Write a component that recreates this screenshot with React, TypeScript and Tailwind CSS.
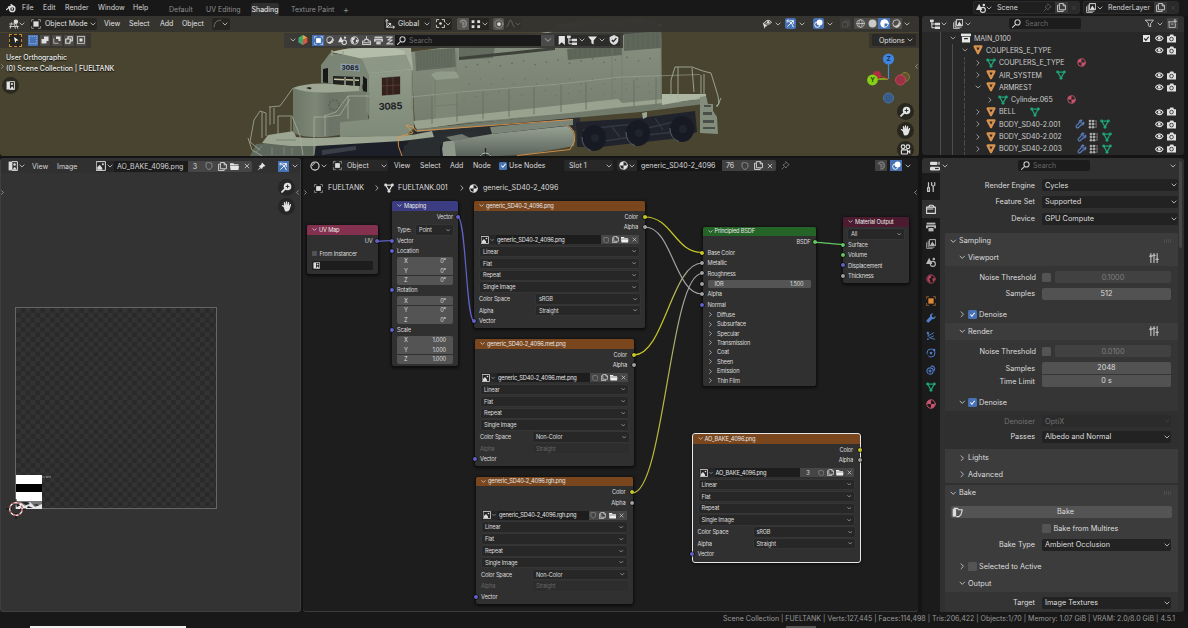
import React from "react";

type Kids = { children?: React.ReactNode };

const line = { fill: "none", stroke: "currentColor", strokeWidth: 1.6, strokeLinejoin: "round" as const, strokeLinecap: "round" as const };

const SHAPES: Record<string, React.ReactNode> = {
  blender: (<g><path {...line} strokeWidth={1.9} d="M1 10.5 9 4M4 6.2h7" /><path {...line} strokeWidth={1.9} d="M8 2.5 14 7" /><circle cx="10" cy="9.4" r="4.2" {...line} strokeWidth={2.3} /><circle cx="10" cy="9.4" r="1.5" fill="currentColor" /></g>),
  down: <path {...line} strokeWidth={2.3} d="M2.5 5.2 8 10.8 13.5 5.2" />,
  right: <path {...line} strokeWidth={2.3} d="M5 2 11 8 5 14" />,
  left: <path {...line} strokeWidth={2.3} d="M11 2 5 8 11 14" />,
  view3d: (<g><circle cx="11" cy="4.5" r="3.6" fill="currentColor" /><path {...line} strokeWidth={1.3} d="M1 8h7M1 12h14M4 6 2 15M9 8l1 7M12 9l2 6" /></g>),
  object: (<g><rect x="3.8" y="3.8" width="8.4" height="8.4" fill="currentColor" /><path {...line} strokeWidth={1.3} opacity=".7" d="M1 4V1h3M12 1h3v3M15 12v3h-3M4 15H1v-3" /></g>),
  cursor: <path d="M4 2 13 8.5 8.5 9.3 6.5 14Z" fill="currentColor" />,
  axes: (<g {...line}><path d="M3 1v12h12M3 13 9 7" /><path d="M1 3 3 1l2 2M13 11l2 2-2 2M9 10V7H6" /></g>),
  pivot: (<g><circle cx="8" cy="8" r="2.4" fill="currentColor" /><path {...line} d="M1 5V1h4M11 1h4v4M15 11v4h-4M5 15H1v-4" /></g>),
  magnet: <path {...line} strokeWidth={3} opacity=".7" d="M2.5 5C6 0 13 2 13 8c0 4-3 6-6 6M6 7c2-2 4 2 1 3.5" />,
  grid4: (<g fill="currentColor"><rect x="1" y="2" width="4.5" height="4.5" /><rect x="10" y="2" width="4.5" height="4.5" /><rect x="1" y="10" width="4.5" height="4.5" /><rect x="10" y="10" width="4.5" height="4.5" /></g>),
  prop: (<g><circle cx="8" cy="8" r="3" fill="currentColor" /><circle cx="8" cy="8" r="6.5" {...line} opacity=".35" /></g>),
  falloff: <path {...line} d="M1 14C5 13 5 2 8 2s3 11 7 12" />,
  curve: <path {...line} d="M2 14C2 6 6 3 14 2" />,
  visible: (<g><path {...line} d="M4 6C7 1 12 1 15 5c-2 4-7 4-9 2" /><circle cx="10" cy="5" r="2" fill="currentColor" /><path d="M1 5 9 11 5.5 12 4 15.5Z" fill="currentColor" /></g>),
  gizmo: (<g {...line}><path d="M3 13 13 3M8 3h5v5" /><path d="M2 3c5 1 9 5 11 11" /><path d="M2 6V2h4" opacity=".7" /></g>),
  overlay: (<g><circle cx="6" cy="10" r="4.8" {...line} /><circle cx="10" cy="6" r="5.2" fill="currentColor" /></g>),
  xray: (<g {...line} opacity=".3"><rect x="2" y="5" width="9" height="9" /><path d="M5 5V2h9v9h-3" /></g>),
  wire: (<g {...line} strokeWidth={1.3}><circle cx="8" cy="8" r="6.8" /><ellipse cx="8" cy="8" rx="3" ry="6.8" /><path d="M1.5 8h13" /></g>),
  solid: <circle cx="8" cy="8" r="7" fill="currentColor" />,
  material: (<g><circle cx="8" cy="8" r="6.6" {...line} /><path d="M8 1A7 7 0 0 0 8 15V8h6.8A7 7 0 0 0 8 1Z" fill="currentColor" /></g>),
  matball: (<g><circle cx="8" cy="8" r="6.8" {...line} /><path d="M8 1.4A6.6 6.6 0 0 0 1.4 8H8v6.6A6.6 6.6 0 0 0 14.6 8H8Z" fill="currentColor" /></g>),
  rendered: (<g><circle cx="8" cy="8" r="6.6" {...line} /><path d="M3 12C8 13 13 9 12 3 16 7 13 15 8 15 6 15 4 14 3 12Z" fill="currentColor" /></g>),
  tree: (<g fill="currentColor"><rect x="0" y="1" width="6" height="4" /><rect x="8" y="6" width="8" height="4" /><rect x="8" y="12" width="8" height="4" /><path {...line} d="M3 5v9h5M3 8h5" /></g>),
  layers: (<g><path {...line} strokeWidth={1.3} d="M1 6v9h9M3.5 3.5V13H13" /><rect x="6" y="1" width="9.5" height="9.5" {...line} /><path d="M7 9.5 10 4l4 5.5Z" fill="currentColor" /></g>),
  funnel: <path {...line} d="M1 2h14L10 8v6l-4-2V8Z" />,
  funnelf: <path fill="currentColor" d="M0 1h16L10 8v7l-4-2V8Z" />,
  search: (<g {...line} strokeWidth={1.9}><circle cx="9.8" cy="6" r="4.6" /><path d="M6.5 9.5 1 15" /></g>),
  zoomin: (<g><circle cx="9.5" cy="6.5" r="5.5" fill="currentColor" /><path {...line} strokeWidth={2.6} d="M5.5 10.5 1.5 14.5" /><path d="M9.5 3.8v5.4M6.8 6.5h5.4" stroke="#222" strokeWidth="1.3" /></g>),
  hand: <path fill="currentColor" d="M4 9 1 6.8C1.5 5 3 5.5 4.5 7L4 2.5c.7-1.4 1.6-1 2 .2L6.7 6 7 1.4c.6-1.3 1.8-1 2 0L9.2 6l1-3.8c.8-1 1.8-.6 1.8.5L11.5 7l1.6-2.2c1-.8 1.9 0 1.5 1L13 11c-.8 3-2.200 4.400-5 4.400S5 12 4 9Z" />,
  camview: (<g><circle cx="4.5" cy="4" r="2.7" {...line} /><circle cx="11.5" cy="4" r="2.7" {...line} /><rect x="2" y="8.5" width="9" height="6" rx="1" {...line} /><path d="M11 11 15 8.500v6Z" fill="currentColor" /></g>),
  pin: (<g fill="currentColor"><path d="M9 1 15 7 13.5 8 12.5 7.6 9.6 10.4 9 13 3 7 5.7 6.4 8.4 3.5 8 2.4Z" /><path d="M5.5 9 7 10.5 1 15.3Z" /></g>),
  pino: <path {...line} strokeWidth={1.3} d="M9 1.5 14.5 7 12.5 7.6 9.6 10.4 9 12.5 3.5 7 5.7 6.4 8.4 3.5ZM6 10 1.5 14.5" />,
  copy: (<g {...line}><path d="M5 1h6l4 4v7H5ZM11 1v4h4" /><path d="M2.5 4H1v11h10v-1.5" /></g>),
  close: <path {...line} strokeWidth={2} d="M3 3 13 13M13 3 3 13" />,
  shield: <path {...line} strokeWidth={1.5} d="M8 1 14 3v5c0 4-3 6-6 7-3-1-6-3-6-7V3Z" />,
  shieldf: (<g><path fill="currentColor" d="M8 0 15 3v5c0 4-3 7-7 8-4-1-7-4-7-8V3Z" /><path d="M4.5 8 7 10.5 11.8 5" fill="none" stroke="#222" strokeWidth="2" /></g>),
  folder: (<g fill="currentColor"><path d="M0 2h6l2 2h7v2H0Z" /><path d="M0 7h16l-1 7H1Z" /></g>),
  bookmark: <path d="M3 0h11v16L8.500 11 3 16Z" fill="currentColor" />,
  image: (<g><rect x="1" y="1" width="14" height="14" {...line} /><path d="M2 14V10l4-4 4 5v3Z" fill="currentColor" /><circle cx="11" cy="5" r="1.6" fill="currentColor" /></g>),
  imged: (<g><path d="M1 1h6v14H1Z" fill="currentColor" /><path {...line} d="M7 1h8v14H7" /><circle cx="10.5" cy="5.5" r="2" fill="currentColor" /><path d="M7 14 11 9l3 5Z" fill="currentColor" /></g>),
  eye: (<g><path {...line} strokeWidth={2} d="M.8 8C4 2 12 2 15.2 8 12 14 4 14 .8 8Z" /><circle cx="8" cy="8" r="2.6" fill="currentColor" /></g>),
  camera: (<g><path fill="currentColor" d="M0 4h4l2-3h5l1.500 3H16v11H0Z" /><circle cx="8" cy="9" r="3.200" fill="none" stroke="#282828" strokeWidth="1.500" /></g>),
  box: (<g fill="currentColor"><rect x="0" y="1" width="16" height="4" /><path d="M1.500 6h13v9h-13Z" /><rect x="5" y="8" width="6" height="2" fill="#282828" /></g>),
  newcoll: (<g><path {...line} d="M1 5h8M2 5v10h11V9M6 9h3" /><path {...line} strokeWidth={2.2} d="M12.500 1v6M9.500 4h6" /></g>),
  tri: <path d="M2.500 2.300h11L8 13Z" fill="none" stroke="currentColor" strokeWidth="3.600" strokeLinejoin="round" />,
  mesh: (<g><path d="M3 3.500h10L8 13Z" {...line} strokeWidth={1.900} /><circle cx="2.600" cy="3.200" r="2.300" fill="currentColor" /><circle cx="13.400" cy="3.200" r="2.300" fill="currentColor" /><circle cx="8" cy="13.300" r="2.300" fill="currentColor" /></g>),
  wrench: <path fill="currentColor" d="M15 4.500 12.500 7 9.800 6.200 9 3.500 11.500 1C9 0 5.500 2 6.300 6L1 11.500c-1 2 1.500 4.500 3.500 3.500L10 9.700c4 .8 6-2.700 5-5.200Z" />,
  wrencho: <path {...line} strokeWidth={1.9} d="M14 5 12 7 9.800 6.200 9 4 11 2C8 1 6 3 6.800 6L2 11c-1 2 1 4 3 3l5-4.800c3 .8 5-1.200 4-4.200Z" />,
  vgroup: (<g fill="currentColor"><path {...line} opacity=".5" d="M3 3v10M8 3v10M13 3v10M3 8h10M3 3h10M3 13h10" /><circle cx="3" cy="3" r="2" /><circle cx="8" cy="3" r="2" /><circle cx="3" cy="8" r="2" /><circle cx="8" cy="8" r="2" /><circle cx="3" cy="13" r="2" /><circle cx="8" cy="13" r="2" /></g>),
  props: (<g fill="currentColor"><rect x="0" y="1" width="12" height="5.500" rx="2" /><rect x="0" y="9" width="16" height="6" rx="2" /><path d="M13 1h3v5h-3Z" opacity=".6" /><rect x="8" y="11" width="6" height="2" fill="#303030" /></g>),
  tool: (<g {...line} strokeWidth={2}><path d="M4 1v7M2.500 9v6h3V9Z" /><path d="M9 1v4l2.500 2L14 5V1M11.500 7v8" /></g>),
  renderp: (<g><path {...line} strokeWidth={1.700} d="M1 5h14v10H1ZM4 5l2-3h5l2 3" /><path d="M2 8h9" {...line} /></g>),
  printer: (<g fill="currentColor"><rect x="1" y="1" width="14" height="3" /><path d="M0 5h16v5h-3V8H3v2H0Z" /><rect x="4" y="9.500" width="8" height="5.500" /></g>),
  scene: (<g><path d="M5 1 10 11H0Z" fill="currentColor" /><circle cx="11" cy="11" r="4" {...line} strokeWidth={1.800} /><circle cx="12.500" cy="3" r="2" fill="currentColor" /></g>),
  world: (<g><circle cx="8" cy="8" r="6.600" {...line} /><path fill="currentColor" d="M4 3 9 2 8 6 5 8 7 11 6 14 2 9ZM11 6l3 1-1 5-3-2Z" /></g>),
  particles: (<g><path {...line} d="M3 2C3 10 6 12 14 13M3 8 12 3M6 11 12 8" /><circle cx="3" cy="3" r="2" fill="currentColor" /><circle cx="3" cy="13" r="1.500" fill="currentColor" /></g>),
  physics: (<g><circle cx="8" cy="8" r="6.400" {...line} strokeDasharray="14 4" /><circle cx="8" cy="8" r="2.200" fill="currentColor" /><circle cx="13" cy="3" r="2" fill="currentColor" /></g>),
  constraint: (<g {...line} strokeWidth={1.800}><circle cx="6.500" cy="9.500" r="5" /><circle cx="6.500" cy="9.500" r="1.500" /><path d="M8 2c5-1 7 3 5 7" /></g>),
  printer2: (<g><path {...line} strokeWidth={1.8} d="M8 1v5M5 6h6v3h4v6H1V9h4ZM1 12h14" /></g>),
  wave: (<g {...line} strokeWidth={2}><path d="M3 2h10L5 7h8L3 14h11" /></g>),
  sel1: <rect x="2" y="2" width="12" height="12" fill="none" stroke="#a9c3f5" strokeWidth="1.300" strokeDasharray="2 1.600" />,
  sel2: <path fill="currentColor" d="M6 1h9v9h-4v5H1V6h5Z" />,
  sel3: (<g><path fill="currentColor" d="M6 1h9v9h-4V6H6Z" /><path d="M1.500 6v8.500H10" {...line} strokeDasharray="2 2" /></g>),
  sel4: (<g><path d="M6 1.500h8.500V10H11V6H6ZM6 6H1.500v8.500H10V10" {...line} strokeWidth={2.400} /></g>),
  sel5: (<g><rect x="5" y="5" width="6" height="6" fill="currentColor" /><rect x="1" y="1" width="14" height="14" {...line} strokeDasharray="2 2" /></g>),
  sliders: (<g {...line} strokeWidth={1.700}><path d="M3 1v14M8 1v14M13 1v14M1 5h4M6 3.500h4M11 10h4" /></g>),
  shaderball: (<g><circle cx="8" cy="8" r="6.500" {...line} strokeWidth={1.800} /><path {...line} d="M4 7a4 4 0 0 1 3-3" /></g>),
  bake: (<g><path d="M1 3h5v11H1Z" fill="currentColor" /><path {...line} d="M3 2h5l1.500 2H15L13 11 10 14H7" /></g>),
};

function I({ n, c = "size-[10px] text-[#dcdcdc]" }: { n: string; c?: string }) {
  return <svg viewBox="0 0 16 16" className={"block shrink-0 " + c}>{SHAPES[n]}</svg>;
}

/** Fixed-width cell of a toolbar row. */
function C({ c, children }: { c: string } & Kids) {
  return <div className={"flex shrink-0 items-center whitespace-nowrap " + c}>{children}</div>;
}

function Chev({ c = "w-[8px]" }: { c?: string }) {
  return <C c={c}><I n="down" c="size-[6px] text-[#c4c4c4]" /></C>;
}

function TopBar() {
  return (
    <div className="flex h-[16px] shrink-0 bg-[#181818] text-[#d6d6d6]">
      <div className="flex h-[15px] w-[165px] items-center pl-[6px]">
        <C c="w-[16px]"><I n="blender" /></C>
        <C c="w-[21px]">File</C>
        <C c="w-[22px]">Edit</C>
        <C c="w-[33px]">Render</C>
        <C c="w-[35px]">Window</C>
        <C c="w-[20px]">Help</C>
      </div>
      <div className="flex h-[16px] items-center pt-[2px] text-[#8f8f8f]">
        <C c="w-[37px] pl-[4px]">Default</C>
        <C c="w-[49px] pl-[4px]">UV Editing</C>
        <C c="h-[13px] w-[28px] justify-center rounded-t-[2px] bg-[#2f2f2f] text-[#f0f0f0]">Shading</C>
        <C c="w-[64px] pl-[12px]">Texture Paint</C>
        <C c="text-[9px]">+</C>
      </div>
      <div className="ml-auto flex h-[15px] items-center pr-[10px]">
        <div className="flex h-[11px] w-[105px] items-center rounded-[2px] bg-[#1f1f1f] ring-1 ring-[#2c2c2c]">
          <C c="w-[12px] pl-[2px]"><I n="scene" /></C>
          <Chev c="w-[7px]" />
          <C c="w-[50px] pl-[4px]">Scene</C>
          <C c="w-[12px]"><I n="pino" c="size-[9px] text-[#666]" /></C>
          <C c="h-[11px] w-[13px] justify-center bg-[#3a3a3a]"><I n="copy" c="size-[9px] text-[#d0d0d0]" /></C>
          <C c="h-[11px] w-[11px] justify-center bg-[#2a2a2a]"><I n="close" c="size-[6px] text-[#444]" /></C>
        </div>
        <div className="ml-[5px] flex h-[11px] w-[94px] items-center rounded-[2px] bg-[#1f1f1f] ring-1 ring-[#2c2c2c]">
          <C c="w-[13px] pl-[2px]"><I n="layers" /></C>
          <Chev c="w-[7px]" />
          <C c="w-[50px] pl-[4px]">RenderLayer</C>
          <C c="h-[11px] w-[13px] justify-center bg-[#3a3a3a]"><I n="copy" c="size-[9px] text-[#d0d0d0]" /></C>
          <C c="h-[11px] w-[11px] justify-center bg-[#2a2a2a]"><I n="close" c="size-[6px] text-[#444]" /></C>
        </div>
      </div>
    </div>
  );
}

const posts = [432, 457, 483, 509, 534, 561, 586, 634, 656];

function Locomotive() {
  return (
    <svg viewBox="0 16 920 140" className="absolute inset-0 h-[140px] w-[920px]">
      <defs>
        <linearGradient id="hood" x1="0" y1="0" x2="0" y2="1"><stop offset="0" stopColor="#8a9382" /><stop offset="1" stopColor="#737c6d" /></linearGradient>
        <linearGradient id="nose" x1="0" y1="0" x2="1" y2="0"><stop offset="0" stopColor="#6e7768" /><stop offset=".3" stopColor="#7d8776" /><stop offset=".5" stopColor="#6a7365" /><stop offset="1" stopColor="#737c6d" /></linearGradient>
        <linearGradient id="side" x1="0" y1="0" x2="0" y2="1"><stop offset="0" stopColor="#8f9987" /><stop offset="1" stopColor="#808a79" /></linearGradient>
        <linearGradient id="tank" x1="0" y1="0" x2="0" y2="1"><stop offset="0" stopColor="#98a293" /><stop offset=".45" stopColor="#7c867a" /><stop offset="1" stopColor="#5b645c" /></linearGradient>
      </defs>
      <path fill="#1c1f28" d="M300 148 330 142 400 138 440 134 450 156H300Z" />
      <path fill="#3a3f47" d="M322 150l34-4v4l-34 5ZM404 146l20-3 4 5-22 4Z" />
      <path fill="#2a2d30" d="M415 130 580 116 580 130 440 145 440 156H400Z" />
      <path fill="#5f685c" d="M256 144 300 141 316 146 314 156H250Z" />
      <path fill="#9ba592" d="M268 135 294 131 296 137Q312 139 340 137L412 135 432 131 434 137 402 141 316 146 290 146 262 143Z" />
      <path fill="url(#hood)" d="M411 52 500 40 552 31 622 26 661 24 662 106 620 110 415 128Z" />
      <path fill="#474942" d="M500 46 552 32 556 24 620 18 655 20 661 28 661 33 624 35 560 44Z" />
      <path fill="#5c5e54" d="M556 25 600 18 606 22 560 30ZM612 21 640 17 656 22 620 27Z" opacity=".6" />
      <path fill="#636c5e" d="M415 51 455 48 456 67 416 71Z" />
      <path fill="#636c5e" d="M459 48 495 46 493 58 459 60Z" />
      <path fill="#3f423b" d="M459 57 555 47 555 50 459 60Z" />
      <path fill="#5e675a" d="M567 49 622 43 622 55 568 60ZM624 34 661 31 661 48 624 51Z" />
      <path stroke="#525b4f" strokeWidth=".4" d="M418 52v17M421 52v17M424 52v16M427 51v17M430 51v17M433 51v16M436 50v17M439 50v17M442 50v17M445 50v17M448 49v18M451 49v18M570 50v9M575 49v9M580 49v9M585 48v9M590 48v9M595 48v9M600 47v9M605 47v9M610 46v9M615 46v9M628 34v16M633 33v17M638 33v17M643 33v16M648 32v17M653 32v17M657 32v16" />
      <path stroke="#6f7969" strokeWidth=".6" d="M456 50V113M612 46V100M622 34V100M661 33V100" />
      <g fill="#58614f" opacity=".8">
        {Array.from({ length: 17 }, (_, i) => (
          <g key={i}>
            <circle cx={466 + i * 11.5} cy={67 - (i % 3) * 2 - i * 0.4} r=".8" />
            <circle cx={469 + i * 11.2} cy={84 - (i % 2) * 5} r=".6" />
            <circle cx={464 + i * 11.6} cy={99 - (i % 4) * 2 - i * 0.4} r=".5" />
          </g>
        ))}
      </g>
      <path fill="#7d8776" d="M431 75Q434 72 440 72H454Q460 72 460 78L458 117 434 120Z" />
      <path fill="#929c8a" d="M431 75Q434 71.500 440 71.500H454Q458 72 459 78L436 80Z" />
      <path stroke="#697265" strokeWidth=".5" fill="none" d="M435 80V118M435 94l24-2M435 106l24-2" />
      <path fill="#98a28f" d="M413 121 480 114 618 99 622 103 704 95 707 99 622 107 570 113 470 122 417 130Z" />
      <path fill="#727b6b" d="M417 129 622 108 704 99 704 104 640 112 417 132Z" />
      <path fill="#adb7a3" d="M662 94 706 94 706 97 662 105Z" />
      <path fill="url(#nose)" d="M293 88Q305 84 330 86L360 87 368 93V120L340 123V135L325 137Q300 138 293 132Z" />
      <path fill="#9da794" d="M293 88Q305 83 325 83.500L361 86 360 91 330 92.500Q305 93 293 88Z" />
      <path fill="#22241f" d="M306 88l3-1 3 1-2 1.500Z" />
      <circle cx="334" cy="105" r="5" fill="none" stroke="#5b6457" strokeWidth="1.800" strokeDasharray="2 1.500" />
      <path fill="#7b8575" d="M321 65 330 53 362 57 370 74V118L366 110V90L362 84V92H359V83L334 81V84L321 83Z" />
      <path fill="#22231f" d="M333 76 360 77V86L333 84Z" />
      <path fill="#c9c6a4" d="M334 78.500 359 79.500V81L334 80Z" />
      <path stroke="#7b8575" strokeWidth="2" d="M345 77v8M354 77v9" />
      <path fill="#181818" d="M323 69l5-1v15l-5-.5ZM363 76l4 3v13l-4-1Z" />
      <path fill="#a4ae9b" d="M330 52 345 49 388 46.500 411 48 413 70 369 74 362 58Z" />
      <path fill="#b3bda9" d="M332 52 348 48.500 390 46.500 404 51 406 56 364 59Z" />
      <path fill="#8d9785" d="M362 58 406 54.500 412 69 369 73Z" />
      <path fill="url(#side)" d="M369 73 412 69.500 414 128 406 136 340 137 340 122 369 119Z" />
      <path stroke="#6d7667" strokeWidth=".5" fill="none" d="M340 122 369 119V93M412 70V110" />
      <path fill="#33211e" stroke="#98a290" strokeWidth=".6" d="M381.500 77.500 400.500 76V94.500L381.500 96Z" />
      <path stroke="#654439" strokeWidth=".7" d="M387 78v17M393 77v18M382 86l18-1" />
      <path d="M340.500 63.500 359.500 64.500V71.500L340.500 70Z" fill="#8f9fac" />
      <text x="350" y="70" textAnchor="middle" fontFamily="Inter, sans-serif" fontWeight="800" fontSize="6.600" fill="#181c26" transform="rotate(2 350 68)">3085</text>
      <text x="378.500" y="109.500" fontFamily="Inter, sans-serif" fontWeight="700" fontSize="9.500" fill="#1d2125" textLength="24" transform="rotate(-2 390 106)">3085</text>
      <path stroke="#a4ae9b" strokeWidth=".8" fill="none" d="M250 142 254 120 260 111 266 113V136M262 112V138M270 107V125M274 108V124M269 107 280 106 293 88M278 137V116H292L300 136 303 155M291 117V132M248 138 252 150 262 156M314 155V117H326M325 116V136M324 116 336 112 348 96H369M348 96V119M326 117 340 115 350 99M250 142l10 8" />
      <path stroke="#7b8575" strokeWidth="1" fill="none" d="M262 146l-8 8M272 147v8M284 147v8M292 148v7M276 140h20" />
      <path stroke="#9ea895" strokeWidth=".6" fill="none" d="M411 97 460 92 560 84 621 77 700 74.500" />
      {posts.map((x, i) => <path key={x} stroke="#667060" strokeWidth=".9" d={`M${x} ${96 - i * 2.300}V${124 - i * 2.400}`} />)}
      <path stroke="#a4ae9b" strokeWidth=".9" fill="none" d="M671 97 671 80 675 67 692 67 703 71 711 73 718 96 719 104 716 106M678 67V103M704 74V97M701 75V96M692 68 694 92M721 98 717 107" />
      <path fill="#838d7c" d="M700 97 706 96 708 104 713 104 713 111 717 117 718 134 700 133Z" />
      <path fill="#4a5049" d="M704 105h7v2h-7ZM703 112h9v3h-9ZM703 120h11v3h-11ZM703 127h12v2h-12Z" />
      <path fill="#20232c" d="M576 122 640 118 695 111 697 132 680 138 600 147 577 147Z" />
      <path stroke="#343841" strokeWidth="1.300" fill="none" d="M583 130l30-4 25-2 10 4 38-9M598 142l40-6 45-5M612 127l8 10M655 118l8 12" />
      {[[594, 138], [638, 133], [682, 129]].map(([x, y]) => (
        <g key={x}><ellipse cx={x} cy={y} rx="12" ry="13" fill="#171a23" /><path d={`M${x - 12} ${y - 1}a12 13 0 0 0 9 13.500`} fill="none" stroke="#6a7078" strokeWidth=".8" /><circle cx={x + 1} cy={y} r="4" fill="#20242d" /></g>
      ))}
      <path fill="#9ca696" d="M642 113l5-1v5l-4 2Z" />
      <path fill="url(#tank)" d="M443 142 492 134 567 126Q576 129 574 146L530 154 500 156H443Z" />
      <path fill="#7a8477" d="M490 127 573 119V125L492 134Z" />
      <path fill="#8e988a" d="M444 142Q441 146 443 156H456L454 140Z" />
      <path fill="#2b2f31" d="M436 136 470 131 484 134 450 141Z" />
      <path fill="#6f786c" d="M446 137 462 134 470 138 452 141Z" />
      <path stroke="#e0954a" strokeWidth=".9" fill="none" d="M402 156Q397 146 398 137L413 133 406 125 413 127 416 131 573 119.500M567 125Q576 129 574.500 141L570 149.500 517 155.500" />
      <path stroke="#222" strokeWidth="1.200" d="M485.500 148v8M480 155h11" />
      <path stroke="#d8d8d8" strokeWidth=".7" fill="none" d="M480 156q5-6 11 0" />
      <path stroke="#98a28f" strokeWidth="1.300" d="M332 50v6M343 51v4" />
    </svg>
  );
}

function Gizmo() {
  return (
    <svg viewBox="864 48 52 60" className="absolute left-[864px] top-[32px] h-[60px] w-[52px]">
      <path d="M888.500 79V60" stroke="#4b86d8" strokeWidth="1.200" /><path d="M888 79H873" stroke="#8cbf1e" strokeWidth="1.400" /><path d="M888 79l-10-4" stroke="#c33" strokeWidth="1" />
      <circle cx="877" cy="75" r="4" fill="#b02e42" /><circle cx="905" cy="77" r="4.500" fill="#5d5530" stroke="#8a7a35" />
      <circle cx="900.500" cy="80" r="5" fill="#9a3144" stroke="#d0455c" strokeWidth=".9" /><circle cx="888.500" cy="98" r="5" fill="#395b86" stroke="#4b77b5" strokeWidth=".9" />
      <circle cx="888.500" cy="59" r="5.600" fill="#3d85e0" /><circle cx="872.500" cy="80" r="5.400" fill="#86cf17" />
      <text x="888.500" y="61.300" fontFamily="Inter, sans-serif" fontSize="6.500" fontWeight="600" textAnchor="middle" fill="#10284a">Z</text>
      <text x="872.500" y="82.300" fontFamily="Inter, sans-serif" fontSize="6.500" fontWeight="600" textAnchor="middle" fill="#203a05">Y</text>
    </svg>
  );
}

function Round({ n, c }: { n: string; c: string }) {
  return <div className={"absolute flex size-[17px] items-center justify-center rounded-full bg-[#22211c]/85 " + c}><I n={n} c="size-[11px] text-[#e4e4e4]" /></div>;
}

function Viewport() {
  const blue = "h-[11px] w-[11px] justify-center rounded-[2px] bg-[#4772b3]";
  return (
    <div className="relative h-[140px] w-[919px] overflow-hidden rounded-[3px] bg-[#48442f] text-[#e2e2e2]">
      <Locomotive />
      <div className="relative flex h-[16px] items-center bg-[#343330]/90 pb-[1px]">
        <C c="w-[19px] pl-[9px]"><I n="view3d" /></C>
        <Chev c="w-[11px]" />
        <C c="h-[12px] w-[67px] rounded-[2px] bg-[#262522]">
          <C c="w-[15px] pl-[1px]"><I n="object" /></C>
          <C c="w-[45px]">Object Mode</C>
          <Chev c="w-[6px]" />
        </C>
        <C c="w-[25px] pl-[7px]">View</C>
        <C c="w-[31px] pl-[7px]">Select</C>
        <C c="w-[22px] pl-[7px]">Add</C>
        <C c="w-[37px] pl-[7px]">Object</C>
        <C c="h-[12px] w-[18px] rounded-[2px] bg-[#262522] pl-[1px]"><I n="curve" c="size-[9px] text-[#777]" /><Chev /></C>
        <C c="ml-[154px] h-[12px] w-[47px] rounded-[2px] bg-[#262522] pl-[1px]">
          <C c="w-[13px]"><I n="axes" /></C>
          <C c="w-[26px]">Global</C>
          <Chev c="w-[6px]" />
        </C>
        <C c="ml-[5px] h-[12px] w-[16px] rounded-[2px] bg-[#262522]"><I n="pivot" c="size-[9px] text-[#dcdcdc]" /><Chev /></C>
        <C c="ml-[5px] h-[12px] w-[12px] justify-center rounded-l-[2px] bg-[#555550]"><I n="magnet" c="size-[9px] text-[#999]" /></C>
        <C c="h-[12px] w-[20px] bg-[#262522] pl-[2px]"><I n="grid4" /><Chev c="w-[7px] pl-[1px]" /></C>
        <C c="ml-[4px] h-[12px] w-[11px] justify-center rounded-[2px] bg-[#555550]"><I n="prop" /></C>
        <C c="h-[12px] w-[18px] bg-[#2c2b28] pl-[2px] opacity-30"><I n="falloff" c="size-[9px]" /><Chev c="w-[7px]" /></C>
        <div className="ml-auto flex w-[157px] items-center">
          <C c="w-[13px]"><I n="visible" /></C>
          <Chev c="w-[10px]" />
          <C c={blue}><I n="gizmo" c="size-[9px] text-white" /></C>
          <Chev c="w-[17px] pl-[3px]" />
          <C c={blue}><I n="overlay" c="size-[9px] text-white" /></C>
          <Chev c="w-[16px] pl-[3px]" />
          <C c="h-[11px] w-[11px] justify-center bg-[#3c3b38]"><I n="xray" c="size-[8px] text-[#888]" /></C>
          <C c="ml-[3px] h-[11px] w-[12px] justify-center bg-[#4c4b48]"><I n="wire" c="size-[9px] text-[#ccc]" /></C>
          <C c="h-[11px] w-[12px] justify-center bg-[#4c4b48]"><I n="solid" c="size-[9px] text-[#c9c9c9]" /></C>
          <C c="h-[11px] w-[12px] justify-center bg-[#4772b3]"><I n="material" c="size-[9px] text-white" /></C>
          <C c="h-[11px] w-[12px] justify-center bg-[#4c4b48]"><I n="rendered" c="size-[9px] text-[#ccc]" /></C>
          <Chev c="w-[10px] pl-[2px]" />
        </div>
      </div>
      <div className="relative flex h-[16px] items-center">
        <div className="flex h-[15px] w-[91px] shrink-0 items-center gap-[2px] bg-[#363530]/90 pl-[9px]">
          <C c="mr-[4px] h-[13px] w-[13px] justify-center border border-dashed border-[#c98a2e] bg-[#262522]"><I n="cursor" c="size-[8px] text-white" /></C>
          <C c="h-[11px] w-[10px] justify-center bg-[#4772b3]"><I n="sel1" c="size-[10px]" /></C>
          <C c="h-[11px] w-[10px] justify-center bg-[#4b4a46]"><I n="sel2" c="size-[8px] text-[#ddd]" /></C>
          <C c="h-[11px] w-[10px] justify-center bg-[#4b4a46]"><I n="sel3" c="size-[8px] text-[#ddd]" /></C>
          <C c="h-[11px] w-[10px] justify-center bg-[#4b4a46]"><I n="sel4" c="size-[8px] text-[#ddd]" /></C>
          <C c="h-[11px] w-[10px] justify-center bg-[#4b4a46]"><I n="sel5" c="size-[8px] text-[#ddd]" /></C>
        </div>
        <div className="ml-[193px] flex h-[15px] w-[339px] shrink-0 items-center bg-[#3a3936]/95 pl-[6px]">
          <Chev />
          <C c="w-[14px]"><svg viewBox="0 0 16 16" className="size-[10px]"><path d="M8 0 15 4 8 8Z" fill="#e8a33a" /><path d="M8 0 1 4v8l7-4Z" fill="#3fae6b" /><path d="M1 12 8 16 15 12V4L8 8Z" fill="#d9573c" /><path d="M1 5l7 3v8l-7-4Z" fill="#44a070" /></svg></C>
          <C c="h-[11px] w-[12px] justify-center bg-[#4772b3]"><I n="object" c="size-[9px] text-white" /></C>
          <C c="h-[11px] w-[12px] justify-center bg-[#4b4b4b]"><I n="rendered" c="size-[8px] text-[#ddd]" /></C>
          <C c="h-[11px] w-[12px] justify-center bg-[#4b4b4b]"><I n="scene" c="size-[9px] text-[#ddd]" /></C>
          <C c="h-[11px] w-[12px] justify-center bg-[#4b4b4b]"><I n="world" c="size-[9px] text-[#ddd]" /></C>
          <C c="h-[11px] w-[12px] justify-center bg-[#4b4b4b]"><I n="printer2" c="size-[9px] text-[#ccc]" /></C>
          <C c="h-[11px] w-[12px] justify-center bg-[#4b4b4b]"><I n="printer" c="size-[9px] text-[#ccc]" /></C>
          <C c="h-[11px] w-[11px] justify-center bg-[#4b4b4b]"><I n="wave" c="size-[9px] text-[#ccc]" /></C>
          <C c="h-[11px] w-[146px] gap-[3px] bg-[#191919] pl-[2px] text-[#6b6b6b]"><I n="search" c="size-[9px] text-[#ccc]" />Search</C>
          <C c="h-[11px] w-[13px] justify-center bg-[#4b4b4b]"><I n="down" c="size-[8px] text-[#888]" /></C>
          <C c="ml-[1px] h-[11px] w-[12px] justify-center bg-[#2b2b29]"><I n="bookmark" c="size-[9px] text-[#e6e6e6]" /></C>
          <C c="h-[11px] w-[21px] bg-[#2b2b29]"><I n="tree" /><Chev c="pl-[2px] w-[8px]" /></C>
          <C c="h-[11px] w-[19px] bg-[#2b2b29]"><I n="funnelf" c="size-[9px] text-[#e6e6e6]" /><Chev c="w-[8px] pl-[2px]" /></C>
          <C c="h-[11px] w-[13px] justify-center bg-[#2b2b29]"><I n="shieldf" /></C>
        </div>
        <div className="ml-auto flex h-[15px] w-[50px] shrink-0 items-center bg-[#363530]/90 pl-[3px]">
          <C c="h-[12px] w-[44px] rounded-[2px] bg-[#2a2926] pl-[7px]"><C c="w-[28px]">Options</C><Chev /></C>
        </div>
      </div>
      <div className="relative ml-[6px] mt-[4px] flex flex-col text-[6.900px] font-medium leading-[11px] text-[#efefef] [text-shadow:0_1px_1px_#000]">
        <span>User Orthographic</span>
        <span>(0) Scene Collection | FUELTANK</span>
      </div>
      <div className="absolute left-[2px] top-[61px] flex size-[17px] items-center justify-center rounded-full bg-[#2b2a20]"><I n="imged" c="size-[9px] text-[#e4e4e4]" /></div>
      <I n="right" c="absolute left-[0px] top-[48px] size-[5px] text-[#aaa]" />
      <I n="left" c="absolute left-[914px] top-[48px] size-[5px] text-[#aaa]" />
      <Gizmo />
      <Round n="zoomin" c="left-[897px] top-[87px]" />
      <Round n="hand" c="left-[897px] top-[106px]" />
      <Round n="camview" c="left-[897px] top-[125px]" />
    </div>
  );
}

type OutRow = { pad: string; open: boolean; icon: string; color: string; name: string; extras?: React.ReactNode; check?: boolean; vis?: boolean; lines: number };
const meshC = "size-[10px] text-[#1fa37a]";
const triC = "size-[10px] text-[#d9924e]";
const bodyExtras = (
  <div className="ml-[15px] flex gap-[2.500px]"><I n="wrencho" c="size-[10px] text-[#5a79b8]" /><I n="vgroup" c="size-[10px] text-[#aaa]" /><I n="mesh" c={meshC} /></div>
);
const outRows: OutRow[] = [
  { pad: "w-[28px]", open: true, icon: "box", color: "size-[10px] text-[#e6e6e6]", name: "MAIN_0100", check: true, vis: true, lines: 1 },
  { pad: "w-[40px]", open: true, icon: "tri", color: triC, name: "COUPLERS_E_TYPE", vis: true, lines: 2 },
  { pad: "w-[53px]", open: false, icon: "mesh", color: meshC, name: "COUPLERS_E_TYPE", extras: <I n="matball" c="ml-[13px] size-[9px] text-[#c9536a]" />, lines: 3 },
  { pad: "w-[53px]", open: false, icon: "tri", color: triC, name: "AIR_SYSTEM", extras: <I n="mesh" c="ml-[14px] size-[10px] text-[#1fa37a]" />, vis: true, lines: 3 },
  { pad: "w-[53px]", open: true, icon: "tri", color: triC, name: "ARMREST", vis: true, lines: 3 },
  { pad: "w-[65px]", open: false, icon: "mesh", color: meshC, name: "Cylinder.065", extras: <I n="matball" c="ml-[14px] size-[9px] text-[#c9536a]" />, lines: 3 },
  { pad: "w-[53px]", open: false, icon: "tri", color: triC, name: "BELL", extras: <I n="mesh" c="ml-[14px] size-[10px] text-[#1fa37a]" />, vis: true, lines: 3 },
  { pad: "w-[53px]", open: false, icon: "tri", color: triC, name: "BODY_SD40-2.001", extras: bodyExtras, vis: true, lines: 3 },
  { pad: "w-[53px]", open: false, icon: "tri", color: triC, name: "BODY_SD40-2.002", extras: bodyExtras, vis: true, lines: 3 },
  { pad: "w-[53px]", open: false, icon: "tri", color: triC, name: "BODY_SD40-2.003", extras: bodyExtras, vis: true, lines: 3 },
];

function Outliner() {
  return (
    <div className="flex h-[139px] w-[262px] flex-col overflow-hidden rounded-[3px] bg-[#282828] text-[#cfcfcf]">
      <div className="flex h-[16px] shrink-0 items-center bg-[#303030] pl-[8px] pb-[1px]">
        <C c="w-[11px]"><I n="tree" /></C><Chev c="w-[12px]" />
        <C c="w-[12px]"><I n="layers" /></C><Chev c="w-[44px]" />
        <C c="h-[11px] w-[72px] gap-[4px] rounded-[2px] bg-[#1c1c1c] pl-[3px] text-[#686868]"><I n="search" c="size-[9px] text-[#ccc]" />Search</C>
        <C c="ml-[64px] w-[12px]"><I n="funnel" c="size-[9px] text-[#ccc]" /></C><Chev c="w-[10px]" />
        <C c="h-[11px] w-[11px] justify-center bg-[#454545]"><I n="newcoll" c="size-[9px] text-[#bbb]" /></C>
      </div>
      {outRows.map((r, i) => (
        <div key={i} className="flex h-[12.300px] shrink-0 items-center">
          <div className={"flex h-full shrink-0 pl-[18px] " + r.pad}>
            <div className="h-full w-[12px] shrink-0 border-l border-[#4c4c4c]" />
            {r.lines > 1 && <div className="h-full w-[12px] shrink-0 border-l border-[#4c4c4c]" />}
            {r.lines > 2 && <div className="h-full w-[8px] shrink-0 border-l border-dashed border-[#4c4c4c]" />}
          </div>
          <C c="w-[10.500px]"><I n={r.open ? "down" : "right"} c="size-[6px] text-[#aaa]" /></C>
          <C c="w-[13.500px]"><I n={r.icon} c={r.color} /></C>
          <span className="whitespace-nowrap tracking-[-0.005em]">{r.name}</span>
          {r.extras}
          <div className="ml-auto flex w-[41px] items-center">
            <C c="w-[12px]">{r.check && <span className="flex size-[7px] items-center justify-center bg-[#e6e6e6]"><svg viewBox="0 0 8 8" className="size-[7px]"><path d="M1.500 4 3.300 6 6.500 2" fill="none" stroke="#222" strokeWidth="1.300" /></svg></span>}</C>
            <C c="w-[12px]">{r.vis && <I n="eye" c="size-[8.500px] text-[#e0e0e0]" />}</C>
            {r.vis && <I n="camera" c="size-[9px] text-[#e0e0e0]" />}
          </div>
        </div>
      ))}
    </div>
  );
}

function ImageEditor() {
  const btn = "h-[11px] justify-center bg-[#464646]";
  return (
    <div className="relative flex h-[454px] w-[301px] flex-col rounded-[3px] border border-[#3f3f3f] border-t-[#333] bg-[#333333] text-[#d6d6d6]">
      <div className="flex h-[14px] shrink-0 items-center bg-[#303030]">
        <C c="w-[18px] pl-[7px]"><I n="imged" /></C><Chev c="w-[13px]" />
        <C c="w-[25px]">View</C><C c="w-[39px]">Image</C>
        <C c="h-[11px] w-[18px] rounded-l-[2px] bg-[#262626]"><I n="image" /><Chev c="w-[8px] pl-[1px]" /></C>
        <C c="h-[11px] w-[74px] bg-[#1c1c1c] pl-[3px]">AO_BAKE_4096.png</C>
        <C c={btn + " w-[14px]"}>3</C>
        <C c={btn + " w-[14px]"}><I n="shield" c="size-[8px] text-[#999]" /></C>
        <C c={btn + " w-[12px]"}><I n="copy" c="size-[9px] text-[#ddd]" /></C>
        <C c={btn + " w-[13px]"}><I n="folder" c="size-[9px] text-[#e6e6e6]" /></C>
        <C c={btn + " w-[11px] rounded-r-[2px]"}><I n="close" c="size-[6px] text-[#ddd]" /></C>
        <C c="w-[26px] pl-[5px]"><I n="pin" c="size-[9px] text-[#e6e6e6]" /></C>
        <C c="h-[11px] w-[11px] justify-center bg-[#4772b3]"><I n="gizmo" c="size-[9px] text-white" /></C>
        <Chev c="w-[8px] pl-[3px]" />
      </div>
      <div className="relative flex-1">
        <div className="absolute left-[14px] top-[134px] size-[202px] border border-[#666] bg-[repeating-conic-gradient(#2a2a2a_0_25%,#333_0_50%)] bg-[length:9.700px_9.700px]" />
        <div className="absolute left-[15px] top-[302px] flex h-[34px] w-[26px] flex-col">
          <div className="h-[9px] bg-white" />
          <div className="h-[8px] bg-black" />
          <div className="h-[9px] bg-white" />
          <svg viewBox="0 0 26 8" className="h-[8px] w-[26px]"><rect width="26" height="8" fill="#777" /><path d="M0 6l5-4 4 3 5-4 5 5 7-3v5H0Z" fill="#e6e6e6" /><path d="M5 1h6l3 2-4 1ZM1 2l4 2-4 2ZM12 5l5 2h-6ZM17 4l4-1 2 2Z" fill="#222" /></svg>
        </div>
        <svg viewBox="0 0 10 4" className="absolute left-[41px] top-[302px] h-[4px] w-[10px]"><path d="M0 2h3M4 1l1 2 1-2M7 1v2M8.500 1v1.500" stroke="#999" strokeWidth=".7" fill="none" /></svg>
        <svg viewBox="0 0 24 24" className="absolute left-[2.500px] top-[323.500px] size-[24px]"><path d="M2 12h6M16 12h6M12 2v6M12 16v6" stroke="#111" strokeWidth="1" /><circle cx="12" cy="12" r="6.300" fill="none" stroke="#fff" strokeWidth="1.200" /><circle cx="12" cy="12" r="6.300" fill="none" stroke="#c2343c" strokeWidth="1.200" strokeDasharray="2.500 2.500" /></svg>
        <div className="absolute left-[277px] top-[6px] flex size-[17px] items-center justify-center rounded-full bg-[#262626]"><I n="zoomin" c="size-[11px] text-[#e4e4e4]" /></div>
        <div className="absolute left-[277px] top-[25px] flex size-[17px] items-center justify-center rounded-full bg-[#262626]"><I n="hand" c="size-[11px] text-[#e4e4e4]" /></div>
        <I n="right" c="absolute left-[-1px] top-[17px] size-[5px] text-[#aaa]" />
        <I n="left" c="absolute left-[294px] top-[17px] size-[5px] text-[#aaa]" />
      </div>
    </div>
  );
}

const SOCK = {
  y: "bg-[#c7c729]", g: "bg-[#a1a1a1]", v: "bg-[#6363c7]", s: "bg-[#63c763]",
};
type S = keyof typeof SOCK;

/** One line of a node, optionally with a socket on either edge. */
function R({ h = "h-[10.400px]", l, r, c = "", children }: { h?: string; l?: S; r?: S; c?: string } & Kids) {
  return (
    <div className={`relative flex shrink-0 items-center whitespace-nowrap px-[5px] ${h} ${c}`}>
      {l && <i className={"absolute left-[-2.500px] size-[4px] rounded-full ring-[0.500px] ring-black " + SOCK[l]} />}
      {r && <i className={"absolute right-[-1.500px] size-[4px] rounded-full ring-[0.500px] ring-black " + SOCK[r]} />}
      {children}
    </div>
  );
}

function Node({ box, head, title, sel, children }: { box: string; head: string; title: string; sel?: boolean } & Kids) {
  return (
    <div className={`absolute flex flex-col rounded-[2px] bg-[#303030] shadow-[0_1px_3px_1px_#0009] ${sel ? "outline outline-[1px] outline-[#e8e8e8]" : ""} ${box}`}>
      <div className={`flex h-[9.500px] shrink-0 items-center gap-[2px] whitespace-nowrap rounded-t-[2px] pl-[5px] text-[#e8e8e8] ${head}`}>
        <I n="down" c="size-[5px] text-[#ddd]" />{title}
      </div>
      {children}
    </div>
  );
}

function Drop({ t, w = "flex-1", dim }: { t: string; w?: string; dim?: boolean }) {
  return (
    <div className={`flex h-[9.500px] items-center justify-between rounded-[1.500px] px-[3px] ring-[0.500px] ${w} ${dim ? "bg-[#2d2d2d] text-[#666] ring-[#333]" : "bg-[#272727] ring-[#3b3b3b]"}`}>
      <span>{t}</span>{!dim && <I n="down" c="size-[4.500px] text-[#bbb]" />}
    </div>
  );
}

function ImageNode({ box, name, space, alphaDim, users, sel, lab }: { box: string; name: string; space: string; alphaDim?: boolean; users?: string; sel?: boolean; lab: string }) {
  const row = "h-[11.800px]";
  const b = "h-[9px] w-[9.500px] justify-center bg-[#464646]";
  return (
    <Node box={box} head="bg-[#79461d]" title={name} sel={sel}>
      <R r="y" c="justify-end !pr-[7px] pt-[1px]" h="h-[11.400px]">Color</R>
      <R r="g" c="justify-end !pr-[7px]">Alpha</R>
      <R h="h-[12px]" c="mt-[1.500px] !px-[6px]">
        <C c="h-[9px] w-[16px] bg-[#262626] pl-[1px]"><I n="image" c="size-[8px] text-[#ddd]" /><I n="down" c="ml-[1px] size-[4px] text-[#bbb]" /></C>
        <div className="flex h-[9px] flex-1 items-center bg-[#1d1d1d] pl-[1px] text-[#e6e6e6]">{name}</div>
        {users && <C c="h-[9px] w-[16px] justify-center bg-[#464646]">{users}</C>}
        <C c={b}><I n="shield" c="size-[6.500px] text-[#999]" /></C>
        <C c={b}><I n="copy" c="size-[7px] text-[#ddd]" /></C>
        <C c={b}><I n="folder" c="size-[7.500px] text-[#eee]" /></C>
        <C c={b}><I n="close" c="size-[5px] text-[#ddd]" /></C>
      </R>
      {["Linear", "Flat", "Repeat", "Single Image"].map((t) => <R key={t} h={row} c="!px-[6px]"><Drop t={t} /></R>)}
      <R h={row}><span className={lab}>Color Space</span><Drop t={space} /></R>
      <R h={row}><span className={lab + (alphaDim ? " text-[#666]" : "")}>Alpha</span><Drop t="Straight" dim={alphaDim} /></R>
      <R h="h-[9.500px]" l="v">Vector</R>
    </Node>
  );
}

function XYZ({ v }: { v: string }) {
  return (
    <div className="mx-[5px] flex h-[28px] shrink-0 flex-col gap-[0.500px] overflow-hidden rounded-[2px]">
      {["X", "Y", "Z"].map((a) => <div key={a} className="flex flex-1 items-center justify-between bg-[#545454] px-[7px]"><span>{a}</span><span>{v}</span></div>)}
    </div>
  );
}

function Wires() {
  return (
    <svg viewBox="303 158 615 454" className="absolute left-0 top-0 h-[454px] w-[615px]">
      <defs>
        <linearGradient id="yg" gradientUnits="userSpaceOnUse" x1="634" y1="355" x2="702" y2="263"><stop offset=".5" stopColor="#c7c729" /><stop offset=".9" stopColor="#a1a1a1" /></linearGradient>
        <linearGradient id="yg2" gradientUnits="userSpaceOnUse" x1="632" y1="493" x2="702" y2="273"><stop offset=".45" stopColor="#b9b93c" /><stop offset=".9" stopColor="#a1a1a1" /></linearGradient>
      </defs>
      <g fill="none" strokeWidth="1.200">
        <path stroke="#c7c729" d="M645 217C672 217 675 252.500 702 252.500" />
        <path stroke="#a1a1a1" d="M645 227C672 227 675 294 702 294" />
        <path stroke="url(#yg)" d="M634 355C664 355 672 263 702 263" />
        <path stroke="url(#yg2)" d="M632.500 493C664 493 670 273.500 702 273.500" />
        <path stroke="#6363c7" d="M377.500 241.300C383 241.300 386 240.500 392 240.500M458 217.500C466 217.500 466 321 474 321" />
        <path stroke="#63c763" d="M815.500 242.300C825 242.300 834 244.500 843 244.500" />
      </g>
    </svg>
  );
}

function NodeEditor() {
  const btn = "h-[11px] justify-center bg-[#404040]";
  return (
    <div className="relative h-[454px] w-[615px] overflow-hidden rounded-[3px] bg-[#1d1d1d] text-[#dcdcdc] shadow-[inset_0_-1px_0_#3c3c3c]">
      <div className="flex h-[15px] items-center">
        <C c="w-[18px] pl-[7px]"><I n="shaderball" /></C><Chev c="w-[11px]" />
        <C c="h-[11px] w-[56px] rounded-[2px] bg-[#282828] pl-[1px]"><C c="w-[14px]"><I n="object" c="size-[9px] text-[#ddd]" /></C><C c="w-[34px]">Object</C><Chev /></C>
        <C c="w-[26px] pl-[6px]">View</C><C c="w-[30px] pl-[6px]">Select</C><C c="w-[23px] pl-[6px]">Add</C><C c="w-[32px] pl-[6px]">Node</C>
        <C c="w-[10px]"><span className="flex size-[8px] items-center justify-center rounded-[1.500px] bg-[#4772b3]"><svg viewBox="0 0 8 8" className="size-[7px]"><path d="M1.500 4 3.300 6 6.500 2" fill="none" stroke="#fff" strokeWidth="1.200" /></svg></span></C>
        <C c="w-[55px]">Use Nodes</C>
        <C c="h-[11px] w-[49px] rounded-[2px] bg-[#282828] pl-[5px]"><C c="w-[37px]">Slot 1</C><Chev /></C>
        <C c="ml-[4px] h-[11px] w-[20px] rounded-l-[2px] bg-[#282828] pl-[2px]"><I n="matball" c="size-[9px] text-[#e6e6e6]" /><Chev c="w-[8px] pl-[1px]" /></C>
        <C c="h-[11px] w-[85px] bg-[#161616] pl-[4px]">generic_SD40-2_4096</C>
        <C c={btn + " w-[16px]"}>76</C>
        <C c={btn + " w-[14px]"}><I n="shield" c="size-[8px] text-[#999]" /></C>
        <C c={btn + " w-[12px]"}><I n="copy" c="size-[9px] text-[#ddd]" /></C>
        <C c={btn + " w-[12px] rounded-r-[2px]"}><I n="close" c="size-[6px] text-[#ddd]" /></C>
        <C c="w-[99px] pl-[5px]"><I n="pino" c="size-[9px] text-[#888]" /></C>
        <C c="h-[11px] w-[12px] justify-center bg-[#404040]"><I n="magnet" c="size-[9px] text-[#888]" /></C>
        <C c="ml-[3px] h-[11px] w-[12px] justify-center bg-[#4772b3]"><I n="overlay" c="size-[9px] text-white" /></C>
        <Chev c="w-[10px] pl-[3px]" />
      </div>
      <div className="mt-[9px] flex h-[12px] items-center pl-[11px] text-[7.100px]">
        <C c="w-[14px]"><I n="object" c="size-[9px] text-[#ddd]" /></C><C c="w-[46px]">FUELTANK</C>
        <C c="w-[10px]"><I n="right" c="size-[6px] text-[#bbb]" /></C>
        <C c="w-[14px]"><I n="mesh" c="size-[10px] text-[#ddd]" /></C><C c="w-[61px]">FUELTANK.001</C>
        <C c="w-[10px]"><I n="right" c="size-[6px] text-[#bbb]" /></C>
        <C c="w-[14px]"><I n="matball" c="size-[9px] text-[#e6e6e6]" /></C><C c="">generic_SD40-2_4096</C>
      </div>
      <I n="right" c="absolute left-[0px] top-[32px] size-[5px] text-[#aaa]" />
      <I n="left" c="absolute left-[610px] top-[32px] size-[5px] text-[#aaa]" />

      <div className="absolute inset-0 text-[5.700px] tracking-[-0.035em]">
        <Node box="left-[4px] top-[67px] h-[48.500px] w-[70.500px]" head="bg-[#83314f]" title="UV Map">
          <R r="v" h="h-[13px]" c="justify-end">UV</R>
          <R h="h-[12px]" c="gap-[2.500px]"><span className="size-[5px] rounded-[1px] bg-[#545454]" />From Instancer</R>
          <R h="h-[12px]"><div className="flex h-[9px] flex-1 items-center rounded-[1.500px] bg-[#1d1d1d] pl-[1px]"><I n="imged" c="size-[7px] text-[#ddd]" /></div></R>
        </Node>
        <Node box="left-[89px] top-[43px] h-[165px] w-[66px]" head="bg-[#3c3c83]" title="Mapping">
          <R r="v" h="h-[13.500px]" c="justify-end">Vector</R>
          <R h="h-[12px]"><span className="w-[19px]">Type:</span><Drop t="Point" /></R>
          <R l="v" h="h-[9.500px]">Vector</R>
          <R l="v" h="h-[11px]">Location</R>
          <XYZ v="0°" />
          <R l="v" h="h-[11.500px]">Rotation</R>
          <XYZ v="0°" />
          <R l="v" h="h-[11.500px]">Scale</R>
          <XYZ v="1.000" />
        </Node>
        <ImageNode box="left-[171px] top-[43px] h-[127px] w-[171px]" name="generic_SD40-2_4096.png" space="sRGB" lab="w-[57px]" />
        <ImageNode box="left-[172px] top-[181px] h-[127px] w-[159px]" name="generic_SD40-2_4096.met.png" space="Non-Color" alphaDim lab="w-[53px]" />
        <ImageNode box="left-[173px] top-[318.500px] h-[127.500px] w-[156.500px]" name="generic_SD40-2_4096.rgh.png" space="Non-Color" alphaDim lab="w-[52px]" />
        <ImageNode box="left-[389.500px] top-[276px] h-[127.500px] w-[167.500px]" name="AO_BAKE_4096.png" space="sRGB" users="3" sel lab="w-[56px]" />
        <Node box="left-[399.500px] top-[68.500px] h-[159.500px] w-[113px]" head="bg-[#256427]" title="Principled BSDF">
          <R r="s" h="h-[11.500px]" c="justify-end">BSDF</R>
          <R l="y">Base Color</R>
          <R l="g">Metallic</R>
          <R l="g">Roughness</R>
          <R l="g"><div className="flex h-[8.500px] flex-1 items-center justify-between rounded-[1.500px] bg-[#545454] px-[7px]"><span>IOR</span><span>1.500</span></div></R>
          <R l="g">Alpha</R>
          <R l="v">Normal</R>
          {["Diffuse", "Subsurface", "Specular", "Transmission", "Coat", "Sheen", "Emission", "Thin Film"].map((t) => (
            <R key={t} h="h-[9.450px]" c="gap-[4.500px]"><I n="right" c="size-[5px] text-[#ccc]" />{t}</R>
          ))}
        </Node>
        <Node box="left-[540px] top-[59px] h-[66px] w-[66px]" head="bg-[#4c1b2f]" title="Material Output">
          <R h="h-[13px]" c="pt-[2px]"><Drop t="All" /></R>
          <R l="s">Surface</R><R l="s">Volume</R><R l="v">Displacement</R><R l="g">Thickness</R>
        </Node>
        <Wires />
      </div>
    </div>
  );
}

function Check({ on }: { on?: boolean }) {
  return (
    <span className={"flex size-[9px] shrink-0 items-center justify-center rounded-[1.500px] " + (on ? "bg-[#4772b3]" : "bg-[#545454]")}>
      {on && <svg viewBox="0 0 8 8" className="size-[7px]"><path d="M1.500 4 3.300 6 6.500 2" fill="none" stroke="#fff" strokeWidth="1.200" /></svg>}
    </span>
  );
}

function Field({ label, h, children, dim, lw = "w-[90px]" }: { label: string; h: string; dim?: boolean; lw?: string } & Kids) {
  return (
    <div className={`flex shrink-0 items-center ${h} ${dim ? "text-[#727272]" : ""}`}>
      <span className={`shrink-0 whitespace-nowrap text-right ${lw}`}>{label}</span>
      {children}
    </div>
  );
}

function Select({ t, w = "w-[129px]", dim }: { t: string; w?: string; dim?: boolean }) {
  return (
    <div className={`ml-[7px] flex h-[12px] items-center justify-between rounded-[2px] pl-[3px] pr-[1px] ${w} ${dim ? "bg-[#2b2b2b]" : "bg-[#222222]"}`}>
      <span>{t}</span><I n="down" c={dim ? "size-[6px] text-[#444]" : "size-[6px] text-[#c4c4c4]"} />
    </div>
  );
}

function Head({ t, open, pad, h, c = "", check, right }: { t: string; open?: boolean; pad: string; h: string; c?: string; check?: boolean; right?: "dots" | "sliders" }) {
  return (
    <div className={`flex shrink-0 items-center ${pad} ${h} ${c}`}>
      <C c="w-[9px]"><I n={open ? "down" : "right"} c="size-[6.500px] text-[#c4c4c4]" /></C>
      {check !== undefined && <C c="w-[11px]"><Check on={check} /></C>}
      <span>{t}</span>
      {right === "sliders" && <I n="sliders" c="ml-auto mr-[19px] size-[10px] text-[#ccc]" />}
      {right === "dots" && (
        <svg viewBox="0 0 8 4" className="ml-auto mr-[6px] h-[4px] w-[8px]"><path d="M0 1h8M0 3h8" stroke="#5c5c5c" strokeWidth="1" strokeDasharray="1 1" /></svg>
      )}
    </div>
  );
}

const tabs: [string, string, string][] = [
  ["tool", "h-[26px]", "text-[#c4c4c4]"], ["renderp", "h-[18px] bg-[#303030]", "text-[#e0e0e0]"], ["printer", "h-[17.500px]", "text-[#b8b8b8]"],
  ["layers", "h-[17.500px]", "text-[#b8b8b8]"], ["scene", "h-[17.500px]", "text-[#b8b8b8]"], ["world", "h-[17.500px]", "text-[#b5415a]"],
  ["object", "mt-[4px] h-[17.500px]", "text-[#e0883a]"], ["wrench", "h-[17.500px]", "text-[#4f7fc9]"], ["particles", "h-[17px]", "text-[#4c78b5]"],
  ["physics", "h-[17px]", "text-[#4c78c5]"], ["constraint", "h-[17.500px]", "text-[#4c78c5]"], ["mesh", "h-[17px]", "text-[#1fa37a]"], ["matball", "h-[17.500px]", "text-[#c9536a]"],
];

function Properties() {
  const num = "flex items-center justify-center bg-[#525252]";
  return (
    <div className="flex h-[454px] w-[262px] flex-col overflow-hidden rounded-[3px] bg-[#303030] text-[7.300px] text-[#dedede]">
      <div className="flex h-[15px] shrink-0 items-center pl-[8px]">
        <C c="w-[12px]"><I n="props" /></C><Chev c="w-[76px]" />
        <C c="h-[11px] w-[72px] gap-[3px] rounded-[2px] bg-[#1c1c1c] pl-[3px] text-[7px] text-[#686868]"><I n="search" c="size-[9px] text-[#ccc]" />Search</C>
        <Chev c="ml-[80px]" />
      </div>
      <div className="flex flex-1">
        <div className="flex w-[18px] shrink-0 flex-col bg-[#1b1b1b] pt-[1px]">
          {tabs.map(([n, h, c]) => <div key={n} className={`flex shrink-0 items-center justify-center ${h}`}><I n={n} c={"size-[10px] " + c} /></div>)}
        </div>
        <div className="ml-[5px] flex w-[233px] shrink-0 flex-col pt-[4px]">
          <Field label="Render Engine" h="h-[16.700px]"><Select t="Cycles" w="w-[136px]" /></Field>
          <Field label="Feature Set" h="h-[16.700px]"><Select t="Supported" w="w-[136px]" /></Field>
          <Field label="Device" h="h-[16.700px]"><Select t="GPU Compute" w="w-[136px]" /></Field>
          <div className="mt-[5.500px] flex h-[250px] shrink-0 flex-col rounded-[2px] bg-[#353535]">
            <Head t="Sampling" open pad="pl-[5px]" h="h-[17px]" c="bg-[#3c3c3c]" right="dots" />
            <Head t="Viewport" open pad="pl-[14px]" h="h-[16px]" c="bg-[#3c3c3c]" right="sliders" />
            <Field label="Noise Threshold" h="mt-[3.500px] h-[16.500px]" lw="w-[91px]"><span className="w-[6px]" /><Check /><div className="ml-[4px] flex h-[12px] w-[116px] items-center justify-center rounded-[2px] bg-[#414141] text-[#7d7d7d]">0.1000</div></Field>
            <Field label="Samples" h="h-[16.500px]" lw="w-[90px]"><div className={num + " ml-[7px] h-[12px] w-[129px] rounded-[2px]"}>512</div></Field>
            <Head t="Denoise" pad="pl-[14px]" h="mt-[4px] h-[17px]" check />
            <Head t="Render" open pad="pl-[14px]" h="h-[16.500px]" c="bg-[#3c3c3c]" right="sliders" />
            <Field label="Noise Threshold" h="mt-[3.500px] h-[16.500px]" lw="w-[91px]"><span className="w-[6px]" /><Check /><div className="ml-[4px] flex h-[12px] w-[116px] items-center justify-center rounded-[2px] bg-[#414141] text-[#7d7d7d]">0.0100</div></Field>
            <div className="mt-[0.500px] flex h-[29px] shrink-0 items-center">
              <div className="flex w-[90px] flex-col text-right leading-[13px]"><span>Samples</span><span>Time Limit</span></div>
              <div className="ml-[7px] flex w-[129px] flex-col gap-[0.500px] overflow-hidden rounded-[2px]"><div className={num + " h-[12.500px]"}>2048</div><div className={num + " h-[12.500px]"}>0 s</div></div>
            </div>
            <Head t="Denoise" open pad="pl-[14px]" h="mt-[5px] h-[17px]" check />
            <div className="flex h-[37.500px] shrink-0 flex-col bg-[#2f2f2f] pt-[2.500px]">
              <Field label="Denoiser" h="h-[15.500px]" dim><Select t="OptiX" dim /></Field>
              <Field label="Passes" h="h-[15px]"><Select t="Albedo and Normal" /></Field>
            </div>
            <Head t="Lights" pad="pl-[14px]" h="h-[18px] pt-[1px]" c="bg-[#3c3c3c]" />
            <Head t="Advanced" pad="pl-[14px]" h="flex-1" c="bg-[#3c3c3c]" />
          </div>
          <div className="mt-[2px] flex h-[129px] shrink-0 flex-col rounded-t-[2px] bg-[#3c3c3c]">
            <Head t="Bake" open pad="pl-[5px]" h="h-[17px]" right="dots" />
            <div className="mx-[6px] mt-[4.500px] flex h-[12px] shrink-0 items-center rounded-[2px] bg-[#545454] pl-[1px]"><I n="bake" c="size-[11px] text-[#ddd]" /><span className="flex-1 pr-[4px] text-center">Bake</span></div>
            <div className="ml-[97px] mt-[3px] flex h-[15px] shrink-0 items-center gap-[2.500px]"><Check />Bake from Multires</div>
            <Field label="Bake Type" h="h-[18px]"><Select t="Ambient Occlusion" /></Field>
            <Head t="Selected to Active" pad="pl-[14px]" h="mt-[4px] h-[17px]" check={false} />
            <Head t="Output" open pad="pl-[14px]" h="h-[17px]" />
            <div className="flex flex-1 bg-[#343434]"><Field label="Target" h="h-[22px]"><Select t="Image Textures" /></Field></div>
          </div>
        </div>
        <div className="ml-[1px] mt-[-12px] h-[87px] w-[3px] rounded-full bg-[#464646]" />
      </div>
    </div>
  );
}

export default function App() {
  return (
    <div className="flex h-[628px] w-[1188px] flex-col overflow-hidden bg-[#141414] font-[Inter,'Noto_Sans',sans-serif] text-[7px] leading-none">
      <TopBar />
      <div className="flex h-[142px] shrink-0 gap-[3px]"><Viewport /><Outliner /></div>
      <div className="flex h-[454px] shrink-0"><ImageEditor /><div className="ml-[2px]"><NodeEditor /></div><div className="ml-[4px]"><Properties /></div></div>
      <div className="flex h-[14px] shrink-0 items-center justify-end whitespace-nowrap bg-[#181818] pr-[13px] text-[7.040px] text-[#9a9a9a]">
        Scene Collection | FUELTANK | Verts:127,445 | Faces:114,498 | Tris:206,422 | Objects:1/70 | Memory: 1.07 GiB | VRAM: 2.0/8.0 GiB | 4.5.1
      </div>
      <div className="flex h-[2px] shrink-0 bg-[#181818]"><div className="ml-[30px] h-[2px] w-[156px] bg-[#f0f0f0]" /><div className="ml-[600px] h-[2px] w-[30px] bg-[#555]" /></div>
    </div>
  );
}
